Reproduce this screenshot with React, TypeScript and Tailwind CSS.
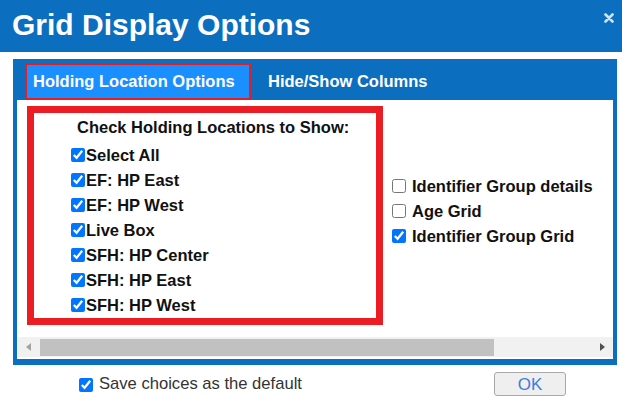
import { useState } from 'react';

const locations = [
  'Select All',
  'EF: HP East',
  'EF: HP West',
  'Live Box',
  'SFH: HP Center',
  'SFH: HP East',
  'SFH: HP West',
];

const gridOptions = [
  { id: 'igd', label: 'Identifier Group details', checked: false },
  { id: 'age', label: 'Age Grid', checked: false },
  { id: 'igg', label: 'Identifier Group Grid', checked: true },
];

export default function App() {
  const [tab, setTab] = useState('holding');

  return (
    <div className="w-[622px] h-[399px] bg-white overflow-hidden font-['Liberation_Sans',Arial,sans-serif] text-[#111]">
      {/* Title bar */}
      <div className="h-[52px] bg-[#0b6ebf] flex items-start justify-between pl-[12px] pr-[8px]">
        <h1 className="mt-[10px] text-[30px] leading-none font-bold text-white">Grid Display Options</h1>
        <svg className="mt-[13px]" width="10" height="10" viewBox="0 0 10 10">
          <path d="M1.5 1.5 L8.5 8.5 M8.5 1.5 L1.5 8.5" stroke="#cfe3f5" strokeWidth="2.6" strokeLinecap="round" />
        </svg>
      </div>

      <div className="h-[7px]" />

      {/* Tab panel */}
      <div className="ml-[13px] w-[604px] bg-[#0b6ebf] px-[4px] pb-[6px]">
        <div className="h-[41px] flex items-start">
          <button
            onClick={() => setTab('holding')}
            className="ml-[8px] mt-[4px] h-[37px] w-[226px] flex items-center pl-[6px] border-2 border-[#e31e24] bg-[#1a8fff] text-white text-[16.5px] font-bold"
          >
            Holding Location Options
          </button>
          <button
            onClick={() => setTab('columns')}
            className="ml-[17px] mt-[4px] h-[37px] flex items-center text-white text-[16.5px] font-bold"
          >
            Hide/Show Columns
          </button>
        </div>

        <div className="bg-white h-[259px] flex flex-col">
          <div className="flex items-start pt-[6px] pl-[10px]">
            {/* Holding locations box */}
            <div className="w-[356px] h-[219px] border-[7px] border-[#ec1c24] flex flex-col">
              <p className="mt-[5px] pl-[43px] text-[16.5px] leading-[19px] font-bold">Check Holding Locations to Show:</p>
              <div className="mt-[5.5px] pl-[37px] flex flex-col">
                {locations.map((loc) => (
                  <label key={loc} className="h-[25px] flex items-center gap-[1px] text-[16.5px] font-bold">
                    <input type="checkbox" defaultChecked className="m-0 w-[14px] h-[14px] accent-[#0075ff]" />
                    <span>{loc}</span>
                  </label>
                ))}
              </div>
            </div>

            {/* Grid options */}
            <div className="ml-[9px] mt-[67.5px] flex flex-col">
              {gridOptions.map((o) => (
                <label key={o.id} className="h-[25px] flex items-center gap-[6px] text-[16.5px] font-bold">
                  <input type="checkbox" defaultChecked={o.checked} className="m-0 w-[14px] h-[14px] accent-[#0075ff]" />
                  <span>{o.label}</span>
                </label>
              ))}
            </div>
          </div>

          {/* Horizontal scrollbar */}
          <div className="mt-[12px] h-[20px] bg-[#f1f1f1] flex items-center">
            <svg className="ml-[9px]" width="5" height="8" viewBox="0 0 5 8">
              <path d="M5 0 L0 4 L5 8 Z" fill="#a3a3a3" />
            </svg>
            <div className="ml-[9px] w-[454px] h-[17px] bg-[#c1c1c1]" />
            <div className="flex-1" />
            <svg className="mr-[8px]" width="5" height="8" viewBox="0 0 5 8">
              <path d="M0 0 L5 4 L0 8 Z" fill="#505050" />
            </svg>
          </div>
        </div>
      </div>

      {/* Footer */}
      <div className="h-[34px] flex items-start">
        <label className="ml-[79px] flex items-start">
          <input type="checkbox" defaultChecked className="mt-[13px] m-0 w-[14px] h-[14px] accent-[#0075ff]" />
          <span className="ml-[6px] mt-[11px] text-[16.6px] leading-none text-[#333]">Save choices as the default</span>
        </label>
        <button className="ml-auto mr-[56px] mt-[7px] w-[72px] h-[24px] rounded-[3px] border border-[#a9a9a9] bg-[#efefef] text-[17px] leading-none text-[#3c7dd9]">
          OK
        </button>
      </div>
      {tab === 'columns' && null}
    </div>
  );
}
